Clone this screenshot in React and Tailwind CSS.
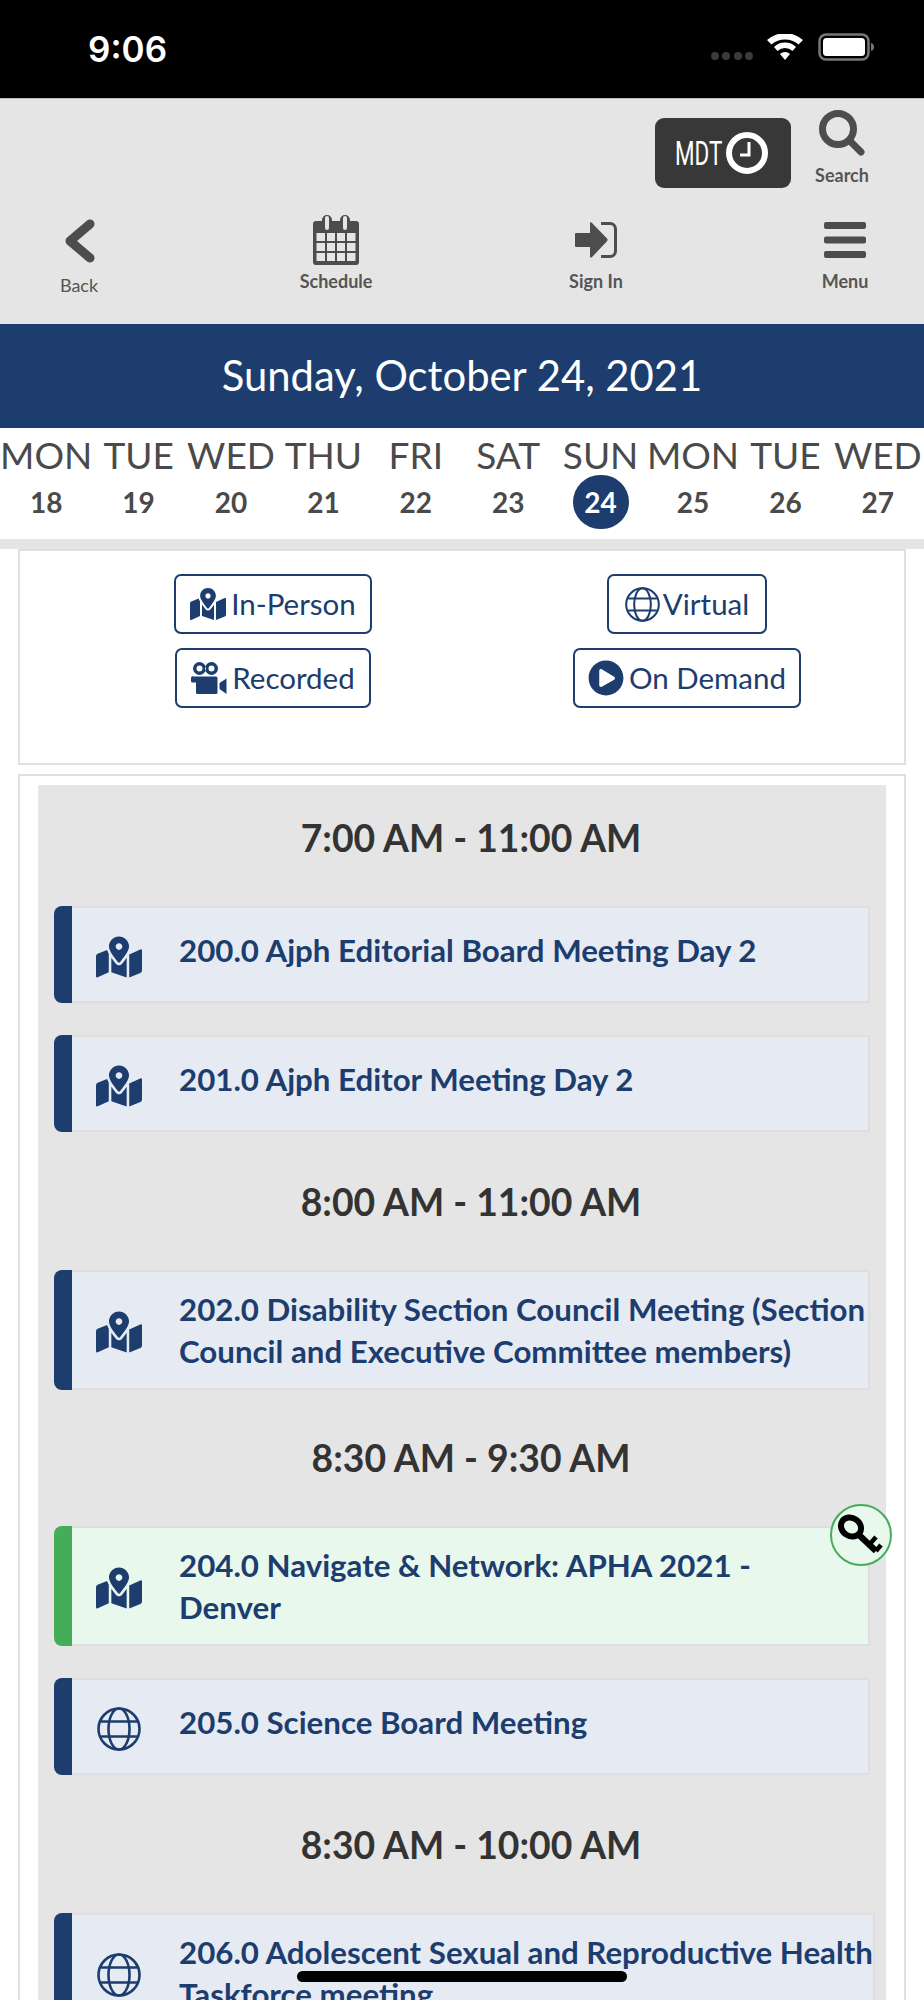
import { FaMapMarkedAlt, FaPlayCircle } from 'react-icons/fa'

const days = [
  ['MON', 18], ['TUE', 19], ['WED', 20], ['THU', 21], ['FRI', 22],
  ['SAT', 23], ['SUN', 24], ['MON', 25], ['TUE', 26], ['WED', 27],
]

const sessions = [
  { time: '7:00 AM - 11:00 AM', items: [
    { icon: 'map', lines: ['200.0 Ajph Editorial Board Meeting Day 2'] },
    { icon: 'map', lines: ['201.0 Ajph Editor Meeting Day 2'] },
  ] },
  { time: '8:00 AM - 11:00 AM', items: [
    { icon: 'map', lines: ['202.0 Disability Section Council Meeting (Section', 'Council and Executive Committee members)'] },
  ] },
  { time: '8:30 AM - 9:30 AM', className: '-mt-[2px]', items: [
    { icon: 'map', green: true, lines: ['204.0 Navigate & Network: APHA 2021 -', 'Denver'] },
    { icon: 'globe', lines: ['205.0 Science Board Meeting'] },
  ] },
  { time: '8:30 AM - 10:00 AM', items: [
    { icon: 'globe', lines: ['206.0 Adolescent Sexual and Reproductive Health', 'Taskforce meeting'] },
  ] },
]

const GlobeIcon = ({ className }) => (
  <svg viewBox="0 0 44 44" fill="none" stroke="currentColor" strokeWidth="2.6" className={className}>
    <circle cx="22" cy="22" r="20.5" />
    <ellipse cx="22" cy="22" rx="10.5" ry="20.5" />
    <path d="M4 14.5h36M4 29.5h36" />
  </svg>
)

const CameraIcon = ({ className }) => (
  <svg viewBox="0 0 36 32" fill="currentColor" className={className}>
    <path fillRule="evenodd" d="M8.5 0a6.5 6.5 0 1 1 0 13 6.5 6.5 0 0 1 0-13zm0 3.5a3 3 0 1 0 0 6 3 3 0 0 0 0-6zM20.5 0a6.5 6.5 0 1 1 0 13 6.5 6.5 0 0 1 0-13zm0 3.5a3 3 0 1 0 0 6 3 3 0 0 0 0-6z" />
    <path d="M3 14.5h22a1.5 1.5 0 0 1 1.5 1.5v14.500a1.500 1.500 0 0 1-1.500 1.500H6.500A1.500 1.500 0 0 1 5 30.500V20.500H1.500A1.500 1.500 0 0 1 0 19v-2.500a2 2 0 0 1 3-2zM35.500 16.500V32l-7-5v-6z" />
  </svg>
)

const KeyIcon = () => (
  <svg viewBox="0 0 58 58" fill="none" stroke="#000" className="w-[58px] h-[58px]">
    <ellipse cx="19" cy="21" rx="10.500" ry="9" strokeWidth="6" transform="rotate(35 19 21)" />
    <path d="M27 29l17 16" strokeWidth="6.500" />
    <path d="M37 39l7-8M44 45l5-6" strokeWidth="4.500" />
  </svg>
)

const CalendarIcon = () => (
  <svg viewBox="0 0 46 50" className="w-[46px] h-[50px]">
    <path fill="#4d4d4d" fillRule="evenodd" d="M3 6h6V5a5 5 0 0 1 10 0v1h8V5a5 5 0 0 1 10 0v1h6a3 3 0 0 1 3 3v38a3 3 0 0 1-3 3H3a3 3 0 0 1-3-3V9a3 3 0 0 1 3-3zM12 3v10a2 2 0 0 0 4 0V3a2 2 0 0 0-4 0zM30 3v10a2 2 0 0 0 4 0V3a2 2 0 0 0-4 0z" />
    <path fill="#e5e5e5" d="M3.500 18h8.500v8H3.500zM14 18h8v8h-8zM24 18h8v8h-8zM34 18h8.500v8H34zM3.500 28h8.500v8H3.500zM14 28h8v8h-8zM24 28h8v8h-8zM34 28h8.500v8H34zM3.500 38h8.500v8H3.500zM14 38h8v8h-8zM24 38h8v8h-8zM34 38h8.500v8H34z" />
  </svg>
)

const SignInIcon = () => (
  <svg viewBox="0 0 42 36" className="w-[42px] h-[36px]">
    <path fill="#4d4d4d" d="M1 11h14V1.500c0-1 1-1.500 1.800-.800L32 16.500c.7.700.7 2 0 2.800L16.800 35.300c-.8.700-1.800.2-1.800-.8V25H1a1 1 0 0 1-1-1V12a1 1 0 0 1 1-1z" />
    <path fill="none" stroke="#4d4d4d" strokeWidth="3" d="M26 1.500h9a5.500 5.500 0 0 1 5.500 5.500v22a5.500 5.500 0 0 1-5.500 5.500h-9" />
  </svg>
)

const NavLabel = ({ children, className }) => (
  <span className={`text-[18px] leading-[22px] text-[#555] ${className}`}>{children}</span>
)

const Item = ({ item }) => {
  const single = item.lines.length === 1
  return (
    <div className="px-4 pt-[15px] pb-[17px]">
      <div className="relative flex">
        <div className={`w-[18px] shrink-0 rounded-l-[8px] ${item.green ? 'bg-[#45ad5a]' : 'bg-[#1c3d6e]'}`} />
        <div className={`flex-1 flex items-center min-h-[97px] border-t-2 border-r-2 border-b-2 border-[#dedede] ${item.green ? 'bg-[#e8f8ec]' : 'bg-[#e6ebf3]'}`}>
          <div className="w-[107px] shrink-0 flex justify-center pr-[14px] pt-[4px] text-[#1c3d6e]">
            {item.icon === 'map'
              ? <FaMapMarkedAlt className="w-[46px] h-[42px]" />
              : <GlobeIcon className="w-[44px] h-[44px]" />}
          </div>
          <div className={`whitespace-nowrap text-[31.25px] leading-[42px] font-bold text-[#1c3d6e] ${single ? 'mb-[10px]' : 'py-4'}`}>
            {item.lines.map((line) => <div key={line}>{line}</div>)}
          </div>
        </div>
        {item.green && (
          <div className="absolute -top-[22px] -right-[22px] w-[62px] h-[62px] rounded-full border-2 border-[#45ad5a] bg-[#e8f8ec] flex items-center justify-center">
            <KeyIcon />
          </div>
        )}
      </div>
    </div>
  )
}

const FilterButton = ({ icon, label, className }) => (
  <button className={`h-[60px] flex items-center rounded-[7px] border-2 border-[#1c3d6e] bg-white text-[29.5px] text-[#1c3d6e] ${className}`}>
    {icon}
    {label}
  </button>
)

const App = () => {
  return (
    <div className='relative h-[2000px] overflow-hidden bg-white font-["Lato",sans-serif]'>
      <div className="h-[98px] bg-black flex items-center pl-[88px] pr-[50px] pt-[4px] text-white">
        <span className="font-['Inter',sans-serif] font-semibold text-[35px] -mt-[3px]">9:06</span>
        <div className="ml-auto flex items-center -mt-[8px]">
          <div className="flex gap-[3.500px] mt-[18px] mr-[14px]">
            {[0, 1, 2, 3].map((n) => <span key={n} className="w-[8px] h-[8px] rounded-full bg-[#3a3a3a]" />)}
          </div>
          <svg viewBox="0 0 36 26" className="w-[36px] h-[26px] mr-[15px]">
            <path fill="#fff" d="M18 26l-5-6a7 7 0 0 1 10 0zM10.500 17l-3.500-4a16 16 0 0 1 22 0l-3.500 4a11 11 0 0 0-15 0zM4.500 10.500L0 6a27 27 0 0 1 36 0l-4.500 4.500a21 21 0 0 0-27 0z" />
          </svg>
          <svg viewBox="0 0 56 28" className="w-[56px] h-[28px]">
            <rect x="1.500" y="1.500" width="49" height="25" rx="6.500" fill="none" stroke="#777" strokeWidth="2.500" />
            <rect x="5" y="5" width="42" height="18" rx="3.500" fill="#fff" />
            <path fill="#777" d="M53 10c2 .5 3 2 3 4s-1 3.500-3 4z" />
          </svg>
        </div>
      </div>

      <div className="h-[226px] bg-[#e5e5e5] border-t border-[#bdbdbd]">
        <div className="flex justify-end pt-[11px] pr-[52px]">
          <div className="mt-[8px] w-[136px] h-[70px] rounded-[9px] bg-[#383838] flex items-center pl-[20px] text-white">
            <span className="inline-block w-[47px] font-['Roboto',sans-serif] text-[33px] leading-none origin-left scale-x-[0.68] whitespace-nowrap">MDT</span>
            <svg viewBox="0 0 42 42" className="ml-[4px] w-[42px] h-[42px]">
              <circle cx="21" cy="21" r="18" fill="none" stroke="#fff" strokeWidth="6" />
              <path d="M23 10v13h-9" fill="none" stroke="#fff" strokeWidth="3" />
            </svg>
          </div>
          <div className="ml-[21px] w-[60px] flex flex-col items-center">
            <svg viewBox="0 0 46 46" className="w-[46px] h-[46px]" fill="none" stroke="#4d4d4d" strokeLinecap="round">
              <circle cx="19" cy="19" r="15.500" strokeWidth="7" />
              <path d="M31 31l11 11" strokeWidth="7" />
            </svg>
            <NavLabel className="mt-[8px] font-bold">Search</NavLabel>
          </div>
        </div>
        <div className="grid grid-cols-[257px_260px_249px_90px] pl-[34px] mt-[27px]">
          <div className="w-[90px] flex flex-col items-center">
            <svg viewBox="0 0 30 44" className="w-[30px] h-[44px] mt-[4px] ml-[2px]" fill="none" stroke="#4d4d4d" strokeWidth="9" strokeLinejoin="round" strokeLinecap="round">
              <path d="M25 5L5 22l20 17" />
            </svg>
            <NavLabel className="mt-[11px]">Back</NavLabel>
          </div>
          <div className="w-[90px] flex flex-col items-center">
            <CalendarIcon />
            <NavLabel className="mt-[5px] font-bold">Schedule</NavLabel>
          </div>
          <div className="w-[90px] flex flex-col items-center">
            <div className="mt-[7px] h-[43px]"><SignInIcon /></div>
            <NavLabel className="mt-[5px] font-bold">Sign In</NavLabel>
          </div>
          <div className="w-[90px] flex flex-col items-center">
            <svg viewBox="0 0 42 36" className="w-[42px] h-[36px] mt-[7px] mb-[7px]" fill="#4d4d4d">
              <rect width="42" height="7" rx="2" />
              <rect y="14.500" width="42" height="7" rx="2" />
              <rect y="29" width="42" height="7" rx="2" />
            </svg>
            <NavLabel className="mt-[5px] font-bold">Menu</NavLabel>
          </div>
        </div>
      </div>

      <div className="h-[104px] bg-[#1c3d6e] flex items-center justify-center pb-[2px] text-white text-[41.800px]">
        Sunday, October 24, 2021
      </div>

      <div className="h-[111px] grid grid-cols-10 text-[#4a4a4a]">
        {days.map(([name, num]) => (
          <div key={`${name}${num}`} className="flex flex-col items-center">
            <span className="text-[37px] leading-[44px] mt-[5px] whitespace-nowrap">{name}</span>
            <span className={`-mt-[2px] w-[56px] h-[54px] rounded-full flex items-center justify-center text-[28px] font-bold ${num === 24 ? 'bg-[#1c3d6e] text-white' : ''}`}>{num}</span>
          </div>
        ))}
      </div>

      <div className="h-[10px] bg-[#e5e5e5]" />

      <div className="mx-[18px] h-[216px] border-2 border-[#dde1e6] pt-[23px]">
        <div className="grid grid-cols-2 gap-y-[14px] pl-[46px] pr-[10px] justify-items-center">
          <FilterButton className="px-[14px] gap-[5px]" icon={<FaMapMarkedAlt className="w-[36px] h-[32px]" />} label="In-Person" />
          <FilterButton className="px-[16px] gap-[3px]" icon={<GlobeIcon className="w-[35px] h-[35px]" />} label="Virtual" />
          <FilterButton className="px-[14px] gap-[5px]" icon={<CameraIcon className="w-[36px] h-[32px]" />} label="Recorded" />
          <FilterButton className="px-[13px] gap-[5px]" icon={<FaPlayCircle className="w-[36px] h-[36px]" />} label="On Demand" />
        </div>
      </div>

      <div className="mt-[9px] mx-[18px] border-2 border-[#dde1e6] pt-[9px] px-[18px]">
        <div className="bg-[#e5e5e5] pb-10">
          {sessions.map((session) => (
            <div key={session.time} className={session.className}>
              <div className="h-[106px] pl-[18px] flex items-center justify-center text-[37.300px] font-bold text-[#333]">{session.time}</div>
              {session.items.map((item) => <Item key={item.lines[0]} item={item} />)}
            </div>
          ))}
        </div>
      </div>

      <div className="absolute left-[297px] top-[1971px] w-[330px] h-[11px] rounded-full bg-black" />
    </div>
  )
}

export default App
